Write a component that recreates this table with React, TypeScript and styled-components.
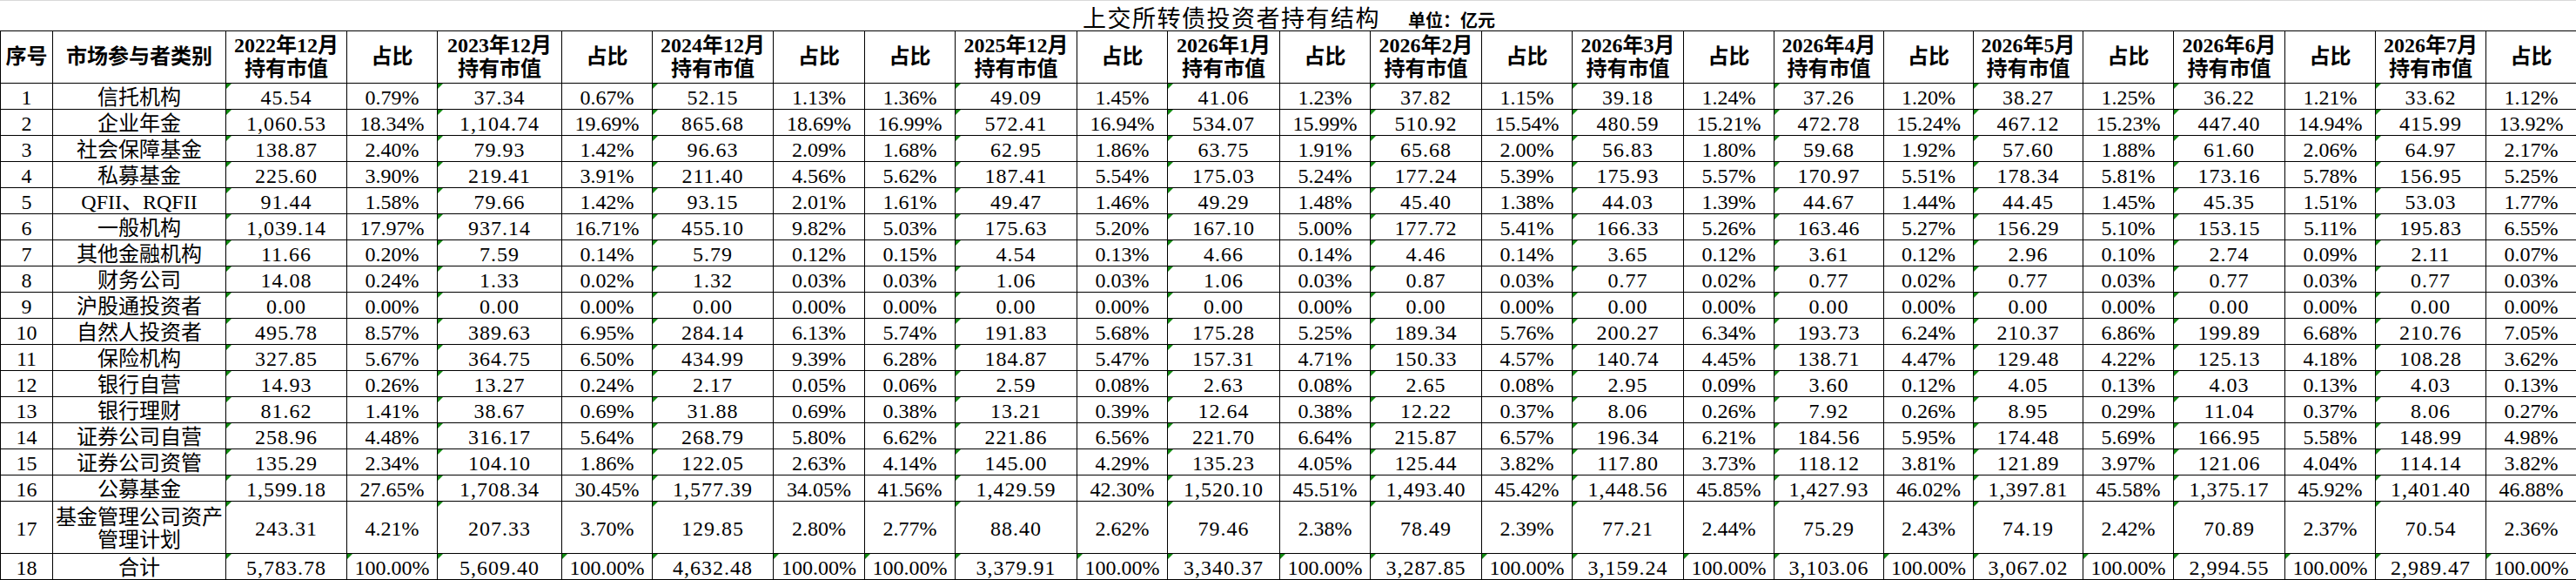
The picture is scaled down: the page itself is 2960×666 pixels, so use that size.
import { createGlobalStyle, css, styled } from "styled-components";

const GlobalStyle = createGlobalStyle`
  html, body {
    margin: 0;
    padding: 0;
    background: #fff;
  }
  body {
    font-family: "Liberation Serif", "Noto Sans CJK SC", serif;
    color: #000;
  }
`;

const Page = styled.div`
  width: 2960px;
  height: 666px;
  overflow: hidden;
`;

const TitleBar = styled.div`
  display: flex;
  justify-content: center;
  align-items: baseline;
  gap: 32px;
  height: 35px;
  padding-left: 2px;
  box-shadow: inset 0 1px 0 #d9d9d9;
`;

const Title = styled.span`
  font-family: "Noto Sans CJK SC", sans-serif;
  font-size: 27px;
  letter-spacing: 1.5px;
  line-height: normal;
`;

const Unit = styled.span`
  font-family: "Noto Sans CJK SC", sans-serif;
  font-size: 20px;
  font-weight: 700;
  line-height: normal;
`;

const Sheet = styled.table`
  border-collapse: collapse;
  table-layout: fixed;
  width: 2960px;
`;

const Col = styled.col<{ $w: number }>`
  width: ${(p) => p.$w}px;
`;

const Row = styled.tr<{ $h: number }>`
  height: ${(p) => p.$h}px;
`;

const HeadCell = styled.th`
  border: 1px solid #000;
  padding: 0;
  font-size: 24px;
  font-weight: 700;
  line-height: 27px;
  text-align: center;
  vertical-align: middle;
  white-space: nowrap;
`;

const Cell = styled.td<{ $flag?: boolean; $wrap?: boolean; $amount?: boolean }>`
  position: relative;
  border: 1px solid #000;
  padding: 2px 1px 0;
  font-size: 24px;
  line-height: ${(p) => (p.$wrap ? 26 : 24)}px;
  letter-spacing: ${(p) => (p.$amount ? "1px" : "normal")};
  text-align: center;
  vertical-align: middle;
  white-space: ${(p) => (p.$wrap ? "normal" : "nowrap")};

  ${(p) =>
    p.$flag &&
    css`
      &::before {
        content: "";
        position: absolute;
        top: 0;
        left: 0;
        border-top: 6px solid #128a12;
        border-right: 6px solid transparent;
      }
    `}
`;

const widths = [
  60, 199, 139, 104, 143, 104, 139, 105, 104, 140, 104, 129, 104, 128, 104,
  128, 104, 126, 103, 126, 104, 128, 104, 127, 104,
];

// header for each data column; null means "占比"
const periods: (string | null)[] = [
  "2022年12月", null, "2023年12月", null, "2024年12月", null, null,
  "2025年12月", null, "2026年1月", null, "2026年2月", null, "2026年3月", null,
  "2026年4月", null, "2026年5月", null, "2026年6月", null, "2026年7月", null,
];

const rows: [string, string][] = [
  ["信托机构", "45.54 0.79% 37.34 0.67% 52.15 1.13% 1.36% 49.09 1.45% 41.06 1.23% 37.82 1.15% 39.18 1.24% 37.26 1.20% 38.27 1.25% 36.22 1.21% 33.62 1.12%"],
  ["企业年金", "1,060.53 18.34% 1,104.74 19.69% 865.68 18.69% 16.99% 572.41 16.94% 534.07 15.99% 510.92 15.54% 480.59 15.21% 472.78 15.24% 467.12 15.23% 447.40 14.94% 415.99 13.92%"],
  ["社会保障基金", "138.87 2.40% 79.93 1.42% 96.63 2.09% 1.68% 62.95 1.86% 63.75 1.91% 65.68 2.00% 56.83 1.80% 59.68 1.92% 57.60 1.88% 61.60 2.06% 64.97 2.17%"],
  ["私募基金", "225.60 3.90% 219.41 3.91% 211.40 4.56% 5.62% 187.41 5.54% 175.03 5.24% 177.24 5.39% 175.93 5.57% 170.97 5.51% 178.34 5.81% 173.16 5.78% 156.95 5.25%"],
  ["QFII、RQFII", "91.44 1.58% 79.66 1.42% 93.15 2.01% 1.61% 49.47 1.46% 49.29 1.48% 45.40 1.38% 44.03 1.39% 44.67 1.44% 44.45 1.45% 45.35 1.51% 53.03 1.77%"],
  ["一般机构", "1,039.14 17.97% 937.14 16.71% 455.10 9.82% 5.03% 175.63 5.20% 167.10 5.00% 177.72 5.41% 166.33 5.26% 163.46 5.27% 156.29 5.10% 153.15 5.11% 195.83 6.55%"],
  ["其他金融机构", "11.66 0.20% 7.59 0.14% 5.79 0.12% 0.15% 4.54 0.13% 4.66 0.14% 4.46 0.14% 3.65 0.12% 3.61 0.12% 2.96 0.10% 2.74 0.09% 2.11 0.07%"],
  ["财务公司", "14.08 0.24% 1.33 0.02% 1.32 0.03% 0.03% 1.06 0.03% 1.06 0.03% 0.87 0.03% 0.77 0.02% 0.77 0.02% 0.77 0.03% 0.77 0.03% 0.77 0.03%"],
  ["沪股通投资者", "0.00 0.00% 0.00 0.00% 0.00 0.00% 0.00% 0.00 0.00% 0.00 0.00% 0.00 0.00% 0.00 0.00% 0.00 0.00% 0.00 0.00% 0.00 0.00% 0.00 0.00%"],
  ["自然人投资者", "495.78 8.57% 389.63 6.95% 284.14 6.13% 5.74% 191.83 5.68% 175.28 5.25% 189.34 5.76% 200.27 6.34% 193.73 6.24% 210.37 6.86% 199.89 6.68% 210.76 7.05%"],
  ["保险机构", "327.85 5.67% 364.75 6.50% 434.99 9.39% 6.28% 184.87 5.47% 157.31 4.71% 150.33 4.57% 140.74 4.45% 138.71 4.47% 129.48 4.22% 125.13 4.18% 108.28 3.62%"],
  ["银行自营", "14.93 0.26% 13.27 0.24% 2.17 0.05% 0.06% 2.59 0.08% 2.63 0.08% 2.65 0.08% 2.95 0.09% 3.60 0.12% 4.05 0.13% 4.03 0.13% 4.03 0.13%"],
  ["银行理财", "81.62 1.41% 38.67 0.69% 31.88 0.69% 0.38% 13.21 0.39% 12.64 0.38% 12.22 0.37% 8.06 0.26% 7.92 0.26% 8.95 0.29% 11.04 0.37% 8.06 0.27%"],
  ["证券公司自营", "258.96 4.48% 316.17 5.64% 268.79 5.80% 6.62% 221.86 6.56% 221.70 6.64% 215.87 6.57% 196.34 6.21% 184.56 5.95% 174.48 5.69% 166.95 5.58% 148.99 4.98%"],
  ["证券公司资管", "135.29 2.34% 104.10 1.86% 122.05 2.63% 4.14% 145.00 4.29% 135.23 4.05% 125.44 3.82% 117.80 3.73% 118.12 3.81% 121.89 3.97% 121.06 4.04% 114.14 3.82%"],
  ["公募基金", "1,599.18 27.65% 1,708.34 30.45% 1,577.39 34.05% 41.56% 1,429.59 42.30% 1,520.10 45.51% 1,493.40 45.42% 1,448.56 45.85% 1,427.93 46.02% 1,397.81 45.58% 1,375.17 45.92% 1,401.40 46.88%"],
  ["基金管理公司资产管理计划", "243.31 4.21% 207.33 3.70% 129.85 2.80% 2.77% 88.40 2.62% 79.46 2.38% 78.49 2.39% 77.21 2.44% 75.29 2.43% 74.19 2.42% 70.89 2.37% 70.54 2.36%"],
  ["合计", "5,783.78 100.00% 5,609.40 100.00% 4,632.48 100.00% 100.00% 3,379.91 100.00% 3,340.37 100.00% 3,287.85 100.00% 3,159.24 100.00% 3,103.06 100.00% 3,067.02 100.00% 2,994.55 100.00% 2,989.47 100.00%"],
];

export default function App() {
  return (
    <Page>
      <GlobalStyle />
      <TitleBar>
        <Title>上交所转债投资者持有结构</Title>
        <Unit>单位：亿元</Unit>
      </TitleBar>
      <Sheet>
        <colgroup>
          {widths.map((w, i) => (
            <Col key={i} $w={w} />
          ))}
        </colgroup>
        <thead>
          <Row $h={60}>
            <HeadCell>序号</HeadCell>
            <HeadCell>市场参与者类别</HeadCell>
            {periods.map((p, i) =>
              p ? (
                <HeadCell key={i}>
                  {p}
                  <br />
                  持有市值
                </HeadCell>
              ) : (
                <HeadCell key={i}>占比</HeadCell>
              )
            )}
          </Row>
        </thead>
        <tbody>
          {rows.map(([name, data], r) => {
            const total = r === rows.length - 1;
            // only the long fund-plan label needs two lines
            const tall = name.length > 10;
            return (
              <Row key={name} $h={tall ? 60 : 30}>
                <Cell>{r + 1}</Cell>
                <Cell $wrap={tall}>{name}</Cell>
                {data.split(" ").map((v, i) => {
                  const amount = periods[i] !== null;
                  return (
                    <Cell key={i} $amount={amount} $flag={total || amount}>
                      {v}
                    </Cell>
                  );
                })}
              </Row>
            );
          })}
        </tbody>
      </Sheet>
    </Page>
  );
}
